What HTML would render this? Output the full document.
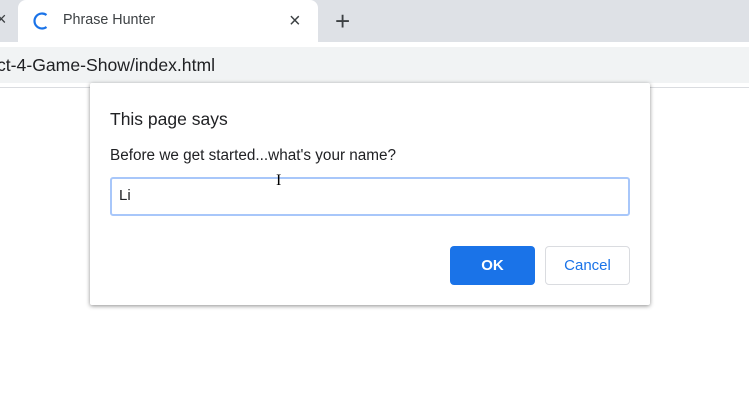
<!DOCTYPE html>
<html><head><style>
*{margin:0;padding:0;box-sizing:border-box}
body{width:749px;height:402px;overflow:hidden;background:#fff;font-family:"Segoe UI","Liberation Sans",sans-serif;position:relative}
.abs{position:absolute;white-space:nowrap}
</style></head><body>
<div class="abs" style="left:0;top:0;width:749px;height:42px;background:#dee1e6"></div>
<div class="abs" style="left:18px;top:0;width:300px;height:44px;background:#fff;border-radius:8px 8px 0 0"></div>
<div class="abs" style="left:-4px;top:9px;font-size:18px;color:#3c4043">×</div>
<svg class="abs" style="left:32px;top:11px" width="20" height="20" viewBox="0 0 20 20"><path d="M14.5 4 A7.5 7.5 0 1 0 14.5 16" fill="none" stroke="#1a73e8" stroke-width="2.2"/></svg>
<div class="abs" style="left:63px;top:12px;font-size:14.3px;color:#3c4043">Phrase Hunter</div>
<div class="abs" style="left:289px;top:9px;font-size:20px;color:#3c4043;line-height:24px">×</div>
<div class="abs" style="left:335px;top:7px;font-size:26px;color:#3c4043;line-height:28px;font-weight:300">+</div>
<div class="abs" style="left:0;top:47px;width:749px;height:36px;background:#f1f3f4"></div>
<div class="abs" style="left:-3px;top:55px;font-size:17.6px;color:#202124">ct-4-Game-Show/index.html</div>
<div class="abs" style="left:0;top:87px;width:749px;height:1px;background:#dadce0"></div>
<div class="abs" style="left:90px;top:83px;width:560px;height:222px;background:#fff;border-radius:2px;box-shadow:0 1px 4px rgba(0,0,0,.45)"></div>
<div class="abs" style="left:110px;top:109px;font-size:17.5px;color:#202124">This page says</div>
<div class="abs" style="left:110px;top:147px;font-size:15.3px;color:#202124">Before we get started...what's your name?</div>
<div class="abs" style="left:110px;top:177px;width:520px;height:39px;border:2px solid #a8c7fa;border-radius:3px"></div>
<div class="abs" style="left:119px;top:187px;font-size:15px;color:#202124">Li</div>
<div class="abs" style="left:276px;top:172px;font-size:16px;color:#000;font-family:'Liberation Serif',serif">I</div>
<div class="abs" style="left:450px;top:246px;width:85px;height:39px;background:#1a73e8;border-radius:4px;color:#fff;font-size:15px;font-weight:bold;text-align:center;line-height:40px">OK</div>
<div class="abs" style="left:545px;top:246px;width:85px;height:39px;background:#fff;border:1px solid #dadce0;border-radius:4px;color:#1a73e8;font-size:15px;text-align:center;line-height:38px">Cancel</div>
</body></html>
